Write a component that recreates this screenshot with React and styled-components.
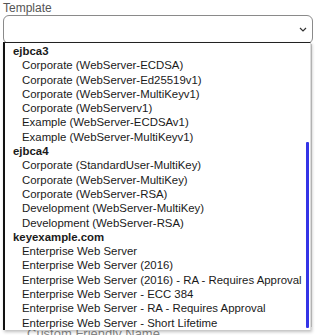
import React from "react";
import styled, { createGlobalStyle } from "styled-components";

const Global = createGlobalStyle`
  body {
    margin: 0;
    background: #fff;
    font-family: "Liberation Sans", Arial, sans-serif;
  }
`;

const Page = styled.div`
  position: relative;
  width: 315px;
  height: 335px;
  overflow: hidden;
  padding: 2px 2px 0 3px;
  box-sizing: border-box;
`;

const Label = styled.div`
  font-size: 12px;
  line-height: 12px;
  color: #555;
  margin-bottom: 1px;
`;

const SelectBox = styled.div`
  height: 29px;
  border: 1px solid #8a8a8a;
  border-radius: 6px;
  box-sizing: border-box;
  display: flex;
  align-items: center;
  justify-content: flex-end;
  padding-right: 5px;
`;

const Behind = styled.div`
  height: 283px;
  border-right: 1px solid #d4d4d4;
  margin-right: 1px;
`;

const BehindLabel = styled.div`
  font-size: 13px;
  line-height: 14px;
  color: #888;
  padding-left: 24px;
`;

const ListBox = styled.div`
  position: absolute;
  top: 42px;
  left: 3px;
  width: 308px;
  height: 288px;
  box-sizing: border-box;
  background: #fff;
  border-top: 1px solid #222;
  border-left: 2px solid #111;
  border-right: 1px solid #ddd;
  box-shadow: 1px 2px 3px rgba(0, 0, 0, 0.25);
  padding-top: 1px;
  overflow: hidden;
`;

const Row = styled.div`
  font-size: 11.4px;
  line-height: 14.3px;
  height: 14.3px;
  color: #1a1a1a;
  white-space: nowrap;
  font-weight: ${(p) => (p.group ? 700 : 400)};
  padding-left: ${(p) => (p.group ? "8px" : "17px")};
`;

const Thumb = styled.div`
  position: absolute;
  right: 1px;
  top: 99px;
  width: 3px;
  height: 186px;
  background: #3434e6;
  border-radius: 1px;
`;

const groups = [
  {
    name: "ejbca3",
    items: [
      "Corporate (WebServer-ECDSA)",
      "Corporate (WebServer-Ed25519v1)",
      "Corporate (WebServer-MultiKeyv1)",
      "Corporate (WebServerv1)",
      "Example (WebServer-ECDSAv1)",
      "Example (WebServer-MultiKeyv1)",
    ],
  },
  {
    name: "ejbca4",
    items: [
      "Corporate (StandardUser-MultiKey)",
      "Corporate (WebServer-MultiKey)",
      "Corporate (WebServer-RSA)",
      "Development (WebServer-MultiKey)",
      "Development (WebServer-RSA)",
    ],
  },
  {
    name: "keyexample.com",
    items: [
      "Enterprise Web Server",
      "Enterprise Web Server (2016)",
      "Enterprise Web Server (2016) - RA - Requires Approval",
      "Enterprise Web Server - ECC 384",
      "Enterprise Web Server - RA - Requires Approval",
      "Enterprise Web Server - Short Lifetime",
    ],
  },
];

function Chevron() {
  return (
    <svg width="8" height="5" viewBox="0 0 8 5" fill="none">
      <path d="M1 1l3 3 3-3" stroke="#333" strokeWidth="1.2" />
    </svg>
  );
}

export default function App() {
  return (
    <Page>
      <Global />
      <Label>Template</Label>
      <SelectBox>
        <Chevron />
      </SelectBox>
      <Behind />
      <BehindLabel>Custom Friendly Name</BehindLabel>
      <ListBox>
        {groups.map((g) => (
          <React.Fragment key={g.name}>
            <Row group>{g.name}</Row>
            {g.items.map((it) => (
              <Row key={it}>{it}</Row>
            ))}
          </React.Fragment>
        ))}
        <Thumb />
      </ListBox>
    </Page>
  );
}
